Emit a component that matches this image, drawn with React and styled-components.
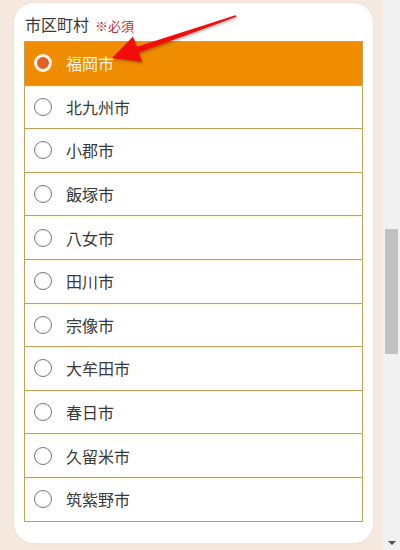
import React from "react";
import styled, { createGlobalStyle } from "styled-components";

const GlobalStyle = createGlobalStyle`
	html, body {
		margin: 0;
		padding: 0;
		height: 100%;
		overflow: hidden;
	}
	body {
		font-family: "Noto Sans CJK JP", "Noto Sans", sans-serif;
		background: #f5e8df;
	}
`;

const Page = styled.div`
	display: flex;
	width: 400px;
	height: 550px;
	background: #f5e8df;
`;

const Main = styled.div`
	flex: 1;
	position: relative;
	padding: 3px 10px 0 14px;
`;

const Card = styled.div`
	background: #fff;
	border-radius: 20px;
	padding: 10px 10px 21px 10px;
	box-shadow: 0 0 2px rgba(220, 200, 185, 0.5);
`;

const Heading = styled.div`
	display: flex;
	align-items: baseline;
	gap: 6px;
	height: 29px;
	padding-left: 1px;
	margin-top: -1px;
	font-size: 16px;
	line-height: 24px;
	color: #3a3a3a;
`;

const Required = styled.span`
	font-size: 13px;
	color: #c4283c;
`;

const List = styled.div`
	border: 1px solid #bfa255;
`;

const Row = styled.label`
	display: flex;
	align-items: center;
	gap: 14px;
	height: 42.6px;
	padding-left: 9px;
	font-size: 16px;
	color: ${p => (p.$selected ? "#fff6e2" : "#3a3a3a")};
	background: ${p => (p.$selected ? "#ef8c00" : "#fff")};
	& + & {
		border-top: 1px solid #bfa255;
		box-shadow: inset 0 1px 0 #fff7d6;
	}
`;

const Radio = styled.span`
	box-sizing: border-box;
	width: 18px;
	height: 18px;
	border-radius: 50%;
	flex-shrink: 0;
	border: ${p => (p.$checked ? "3.5px solid #fdf4ea" : "1px solid #767676")};
	background: ${p => (p.$checked ? "#e0602a" : "#fff")};
`;

const Arrow = styled.svg`
	position: absolute;
	left: 0;
	top: 0;
	pointer-events: none;
`;

const Scrollbar = styled.div`
	width: 17px;
	display: flex;
	flex-direction: column;
	align-items: center;
	background: #f1f1f1;
`;

const Thumb = styled.div`
	width: 13px;
	height: 125px;
	margin-top: 229px;
	background: #c1c1c1;
`;

const DownArrow = styled.div`
	margin-top: auto;
	margin-bottom: 5px;
	width: 0;
	height: 0;
	border-left: 4px solid transparent;
	border-right: 4px solid transparent;
	border-top: 4px solid #505050;
`;

const cities = [
	"福岡市",
	"北九州市",
	"小郡市",
	"飯塚市",
	"八女市",
	"田川市",
	"宗像市",
	"大牟田市",
	"春日市",
	"久留米市",
	"筑紫野市"
];

export default function App() {
	const selected = "福岡市";
	return (
		<Page>
			<GlobalStyle />
			<Main>
				<Card>
					<Heading>
						市区町村<Required>※必須</Required>
					</Heading>
					<List>
						{cities.map(c => (
							<Row key={c} $selected={c === selected}>
								<Radio $checked={c === selected} />
								{c}
							</Row>
						))}
					</List>
				</Card>
				<Arrow width="260" height="80" viewBox="0 0 260 80">
					<defs>
						<filter id="sh" x="-10%" y="-30%" width="120%" height="160%">
							<feDropShadow dx="1" dy="1.5" stdDeviation="1.2" floodColor="#000" floodOpacity="0.3" />
						</filter>
					</defs>
					<polygon
						filter="url(#sh)"
						fill="#f20d0d"
						points="112,58 142,62 139,52.6 236.5,16.8 235.5,15.2 136.8,46.8 133,36.5"
					/>
				</Arrow>
			</Main>
			<Scrollbar>
				<Thumb />
				<DownArrow />
			</Scrollbar>
		</Page>
	);
}
